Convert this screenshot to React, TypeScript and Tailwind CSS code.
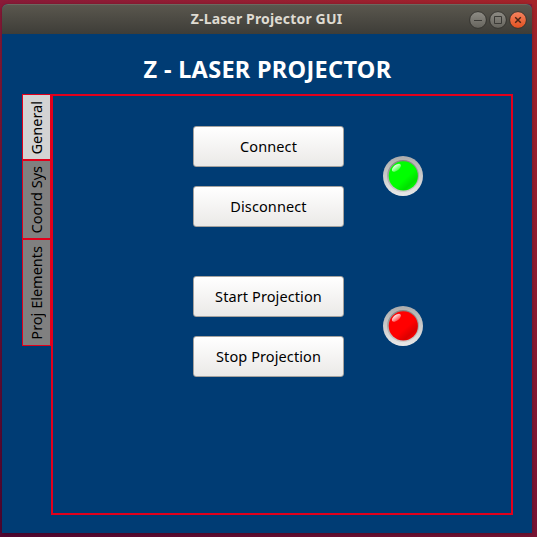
import React from "react";

const font = "font-['Noto_Sans','Open_Sans',sans-serif]";

function WindowButton({ kind }: { kind: "min" | "max" | "close" }) {
  const close = kind === "close";
  return (
    <svg width="18" height="18" viewBox="0 0 18 18" aria-label={kind}>
      <defs>
        <linearGradient id={`wb-${kind}`} x1="0" y1="0" x2="0" y2="1">
          <stop offset="0" stopColor={close ? "#f58460" : "#8f8d86"} />
          <stop offset="1" stopColor={close ? "#e2501f" : "#65635c"} />
        </linearGradient>
      </defs>
      <circle cx="9" cy="9" r="8.4" fill={`url(#wb-${kind})`} stroke="#34332e" strokeWidth="1" />
      {kind === "min" && <path d="M5 9.5h8" stroke="#3b3a36" />}
      {kind === "max" && <path d="M5.5 5.5h7v7h-7z" fill="none" stroke="#3b3a36" />}
      {close && <path d="M6.2 6.2l5.6 5.6M11.8 6.2l-5.6 5.6" stroke="#4a2415" strokeWidth="1.5" />}
    </svg>
  );
}

function TitleBar() {
  return (
    <header className="flex h-[30px] items-center rounded-t-[6px] border-t border-[#6b6860] bg-linear-to-b from-[#5a574e] to-[#3e3d38] pr-[5px]">
      <div className="w-[62px]" />
      <h1 className="flex-1 pb-[2px] text-center text-[14px] leading-[20px] font-bold tracking-[0.16px] text-[#dfdbd2]">
        Z-Laser Projector GUI
      </h1>
      <div className="flex gap-[2px]">
        <WindowButton kind="min" />
        <WindowButton kind="max" />
        <WindowButton kind="close" />
      </div>
    </header>
  );
}

function Tab({ label, className }: { label: string; className: string }) {
  return (
    <button className={`flex w-[29px] items-center justify-center border border-[#e3001b] text-[14.5px] text-black ${className}`}>
      <span className="mr-[2px] rotate-180 leading-[20px] whitespace-nowrap [writing-mode:vertical-rl]">{label}</span>
    </button>
  );
}

function PushButton({ label }: { label: string }) {
  return (
    <button className="flex h-[41px] w-[151px] items-center justify-center rounded-[3px] border border-[#a5a29e] bg-linear-to-b from-white to-[#ebe9e7] pb-[2px] text-[14.5px] leading-[20px] tracking-[0.1px] whitespace-nowrap text-black">
      {label}
    </button>
  );
}

function Led({ color, dark }: { color: string; dark: string }) {
  const id = color.slice(1);
  return (
    <svg width="40" height="40" viewBox="0 0 40 40">
      <defs>
        <linearGradient id={`ring-${id}`} x1="0" y1="0" x2="0" y2="1">
          <stop offset="0" stopColor="#acacac" />
          <stop offset="1" stopColor="#e9e9e9" />
        </linearGradient>
        <linearGradient id={`rim-${id}`} x1="0" y1="0" x2="0" y2="1">
          <stop offset="0" stopColor="#828282" />
          <stop offset="1" stopColor="#cecece" />
        </linearGradient>
        <linearGradient id={`bulb-${id}`} x1="0.15" y1="0.1" x2="0.85" y2="0.9">
          <stop offset="0.6" stopColor={color} />
          <stop offset="0.85" stopColor={dark} />
          <stop offset="1" stopColor={color} />
        </linearGradient>
        <linearGradient id={`shine-${id}`} x1="0" y1="0" x2="0" y2="1">
          <stop offset="0" stopColor="#fff" stopOpacity="0.9" />
          <stop offset="1" stopColor="#fff" stopOpacity="0.3" />
        </linearGradient>
      </defs>
      <circle cx="20" cy="20" r="20" fill={`url(#ring-${id})`} />
      <circle cx="20" cy="20" r="16" fill={`url(#rim-${id})`} />
      <circle cx="20.3" cy="19.9" r="14.6" fill={`url(#bulb-${id})`} />
      <ellipse cx="13.4" cy="11.8" rx="5.3" ry="2.8" transform="rotate(-38 13.4 11.8)" fill={`url(#shine-${id})`} />
    </svg>
  );
}

function ControlGroup({ labels, color, dark }: { labels: string[]; color: string; dark: string }) {
  return (
    <div className="flex h-[101px] gap-[39px]">
      <div className="flex flex-col gap-[19px]">
        {labels.map((l) => (
          <PushButton key={l} label={l} />
        ))}
      </div>
      <div className="pt-[30px]">
        <Led color={color} dark={dark} />
      </div>
    </div>
  );
}

export default function App() {
  return (
    <div className={`flex h-[537px] w-[537px] flex-col overflow-hidden ${font}`}>
      <div className="h-[4px] bg-linear-to-r from-[#8a1a38] to-[#a5242a]" />
      <div className="flex h-[529px] bg-linear-to-b from-[#8a1a38] to-[#520633]">
        <div className="w-[2px]" />
        <div className="z-10 h-[529px] w-[530px] rounded-t-[6px] bg-[#003c74] shadow-[0_1px_4px_rgba(0,0,0,0.3)]">
          <TitleBar />
          <main className="flex flex-col pl-[20px]">
            <h2 className="h-[60px] w-[491px] pt-[19px] text-center text-[23.5px] leading-[32px] font-bold tracking-[0.3px] text-white">
              Z - LASER PROJECTOR
            </h2>
            <div className="flex h-[421px] items-start">
              <nav className="flex flex-col">
                <Tab label="General" className="h-[66px] bg-[#d3d3d3] pt-[2px]" />
                <Tab label="Coord Sys" className="h-[79px] bg-[#808080]" />
                <Tab label="Proj Elements" className="h-[107px] bg-[#808080]" />
              </nav>
              <section className="flex h-[421px] w-[462px] flex-col gap-[49px] border-2 border-[#e3001b] pt-[30px] pl-[140px]">
                <ControlGroup labels={["Connect", "Disconnect"]} color="#00ff00" dark="#00e000" />
                <ControlGroup labels={["Start Projection", "Stop Projection"]} color="#ff0000" dark="#dc0000" />
              </section>
            </div>
          </main>
        </div>
        <div className="w-[5px] bg-linear-to-b from-[#a5242a] to-[#781434]" />
      </div>
      <div className="h-[4px] bg-linear-to-r from-[#540733] to-[#781434]" />
    </div>
  );
}
